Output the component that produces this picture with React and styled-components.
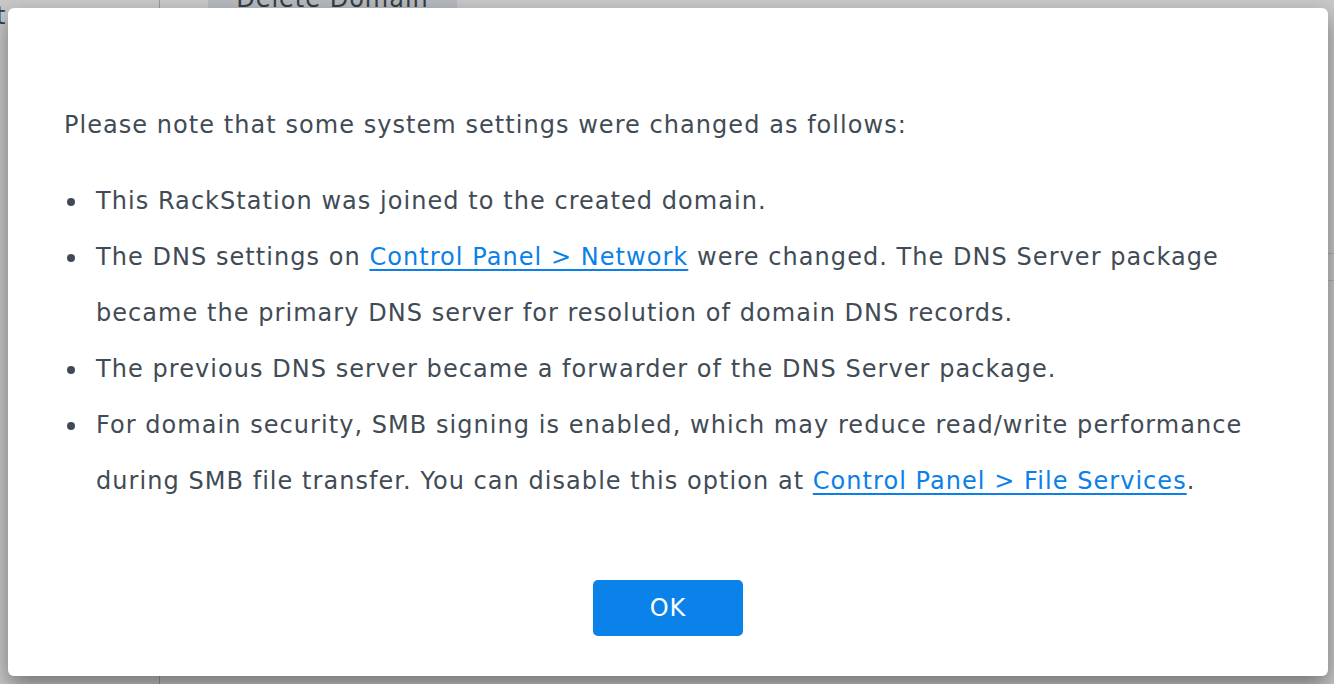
import React from 'react';
import styled, { createGlobalStyle } from 'styled-components';

const GlobalStyle = createGlobalStyle`
  html, body {
    margin: 0;
    padding: 0;
    width: 1334px;
    height: 684px;
    overflow: hidden;
  }
  body {
    font-family: 'DejaVu Sans', Verdana, sans-serif;
  }
`;

const Page = styled.div`
  position: relative;
  width: 1334px;
  height: 684px;
  display: flex;
  background: #f4f5f6;
  overflow: hidden;
`;

const Sidebar = styled.div`
  width: 159px;
  border-right: 1px solid #b9bec4;
  font-size: 24px;
  line-height: 28px;
  color: #414b55;
  padding-top: 2px;
  text-indent: -4px;
`;

const Main = styled.div`
  flex: 1;
  display: flex;
  flex-direction: column;
`;

const Toolbar = styled.div`
  display: flex;
  padding-left: 48px;
`;

const ToolButton = styled.div`
  margin-top: -16px;
  width: 249px;
  height: 30px;
  background: #dfe3e8;
  border-radius: 4px;
  font-size: 24px;
  letter-spacing: 1px;
  color: #414b55;
  display: flex;
  align-items: center;
  justify-content: center;
`;

const Row = styled.div`
  height: 26px;
  border-bottom: 1px solid #d5dade;
`;

const Overlay = styled.div`
  position: absolute;
  inset: 0;
  background: rgba(0, 0, 0, 0.18);
`;

const Dialog = styled.div`
  position: absolute;
  left: 8px;
  top: 8px;
  width: 1320px;
  height: 668px;
  box-sizing: border-box;
  background: #fff;
  border-radius: 6px;
  box-shadow: 0 10px 22px rgba(0, 0, 0, 0.42);
  padding: 89px 56px 40px;
  display: flex;
  flex-direction: column;
  color: #414b55;
  font-size: 24px;
  line-height: 56px;
  letter-spacing: 1.05px;
`;

const Intro = styled.p`
  margin: 0 0 20px;
`;

const List = styled.ul`
  margin: 0;
  padding: 0;
  list-style: none;
`;

const Item = styled.li`
  position: relative;
  padding-left: 32px;

  &::before {
    content: '';
    position: absolute;
    left: 3px;
    top: 25px;
    width: 8px;
    height: 8px;
    border-radius: 50%;
    background: #414b55;
  }
`;

const Link = styled.a`
  color: #0a80e8;
  text-decoration: underline;
  text-underline-offset: 4px;
  text-decoration-thickness: 2px;
  cursor: pointer;
`;

const Footer = styled.div`
  margin-top: auto;
  display: flex;
  justify-content: center;
`;

const OkButton = styled.button`
  width: 150px;
  height: 56px;
  border: none;
  border-radius: 5px;
  background: #0a82ea;
  color: #fff;
  font-family: 'DejaVu Sans', Verdana, sans-serif;
  font-size: 24px;
  letter-spacing: 1px;
  cursor: pointer;
`;

export default function App() {
  return (
    <Page>
      <GlobalStyle />
      <Sidebar>t</Sidebar>
      <Main>
        <Toolbar>
          <ToolButton>Delete Domain</ToolButton>
        </Toolbar>
        <Row style={{ marginTop: 213 }} />
        <Row />
      </Main>
      <Overlay />
      <Dialog>
        <Intro>Please note that some system settings were changed as follows:</Intro>
        <List>
          <Item>This RackStation was joined to the created domain.</Item>
          <Item>
            The DNS settings on <Link>Control Panel &gt; Network</Link> were changed. The DNS Server package
            became the primary DNS server for resolution of domain DNS records.
          </Item>
          <Item>The previous DNS server became a forwarder of the DNS Server package.</Item>
          <Item>
            For domain security, SMB signing is enabled, which may reduce read/write performance during SMB
            file transfer. You can disable this option at <Link>Control Panel &gt; File Services</Link>.
          </Item>
        </List>
        <Footer>
          <OkButton>OK</OkButton>
        </Footer>
      </Dialog>
    </Page>
  );
}
